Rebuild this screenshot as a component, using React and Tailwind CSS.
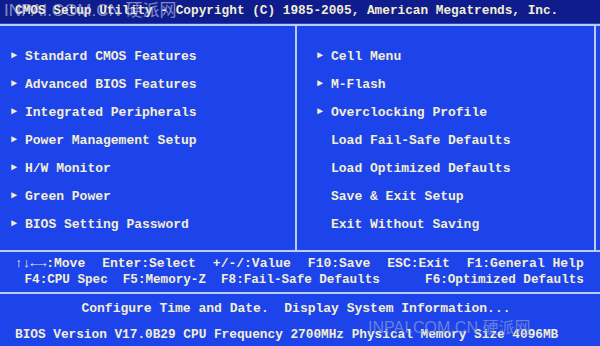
import React from 'react';

const leftItems = [
  { label: 'Standard CMOS Features', arrow: true },
  { label: 'Advanced BIOS Features', arrow: true },
  { label: 'Integrated Peripherals', arrow: true },
  { label: 'Power Management Setup', arrow: true },
  { label: 'H/W Monitor', arrow: true },
  { label: 'Green Power', arrow: true },
  { label: 'BIOS Setting Password', arrow: true },
];

const rightItems = [
  { label: 'Cell Menu', arrow: true },
  { label: 'M-Flash', arrow: true },
  { label: 'Overclocking Profile', arrow: true },
  { label: 'Load Fail-Safe Defaults', arrow: false },
  { label: 'Load Optimized Defaults', arrow: false },
  { label: 'Save & Exit Setup', arrow: false },
  { label: 'Exit Without Saving', arrow: false },
];

const helpKeys = ['↑↓←→:Move', 'Enter:Select', '+/-/:Value', 'F10:Save', 'ESC:Exit', 'F1:General Help'];

const MenuItem = ({ label, arrow }) => (
  <div className="h-[28px] flex items-center">
    <span className="w-[14px] text-[10px] leading-none">{arrow ? '►' : ''}</span>
    <span>{label}</span>
  </div>
);

const App = () => {
  return (
    <div
      className="w-[600px] h-[346px] bg-[#1d44ea] text-[#f3efd2] font-bold text-[13px] leading-none overflow-hidden relative"
      style={{ fontFamily: '"Liberation Mono", "DejaVu Sans Mono", monospace' }}
    >
      {/* Title bar */}
      <div className="h-[23px] bg-[#0f1c8e] flex items-center pl-[15px] whitespace-pre text-[12.75px]">
        CMOS Setup Utility - Copyright (C) 1985-2005, American Megatrends, Inc.
      </div>
      <div className="h-[1px] bg-[#2a45c8]" />
      <div className="h-[2px] bg-[#b9cdf4]" />

      {/* Menu area */}
      <div className="flex h-[224px] border-r-2 border-[#b9cdf4] mr-[4px]">
        <div className="w-[297px] pl-[11px] pt-[16px] border-r-2 border-[#b9cdf4]">
          {leftItems.map((it) => (
            <MenuItem key={it.label} {...it} />
          ))}
        </div>
        <div className="flex-1 pl-[20px] pt-[16px]">
          {rightItems.map((it) => (
            <MenuItem key={it.label} {...it} />
          ))}
        </div>
      </div>

      {/* Help */}
      <div className="h-[2px] bg-[#b9cdf4]" />
      <div className="h-[40px] flex flex-col justify-center gap-[4px] whitespace-pre">
        <div className="flex gap-[17px] pl-[15px]">
          {helpKeys.map((k) => (
            <span key={k}>{k}</span>
          ))}
        </div>
        <div className="pl-[17px] text-[12.6px]"> F4:CPU Spec  F5:Memory-Z  F8:Fail-Safe Defaults      F6:Optimized Defaults</div>
      </div>
      <div className="h-[2px] bg-[#b9cdf4]" />

      {/* Description */}
      <div className="h-[28px] flex items-center justify-center pr-[8px] whitespace-pre">
        Configure Time and Date.  Display System Information...
      </div>
      <div className="h-[26px] flex items-center pl-[15px] whitespace-pre text-[12.75px]">
        BIOS Version V17.0B29 CPU Frequency 2700MHz Physical Memory Size 4096MB
      </div>

      {/* Watermarks */}
      <div
        className="absolute left-[4px] top-[2px] text-[17px] font-normal text-[#c8d2f0] opacity-60 whitespace-pre pointer-events-none"
        style={{ fontFamily: '"Liberation Sans", "Noto Sans CJK SC", sans-serif' }}
      >
        INPAI.COM.CN 硬派网
      </div>
      <div
        className="absolute left-[368px] top-[320px] text-[16px] font-normal text-[#8a9ad8] opacity-70 whitespace-pre pointer-events-none"
        style={{ fontFamily: '"Liberation Sans", "Noto Sans CJK SC", sans-serif' }}
      >
        INPAI.COM.CN 硬派网
      </div>
    </div>
  );
};

export default App;
